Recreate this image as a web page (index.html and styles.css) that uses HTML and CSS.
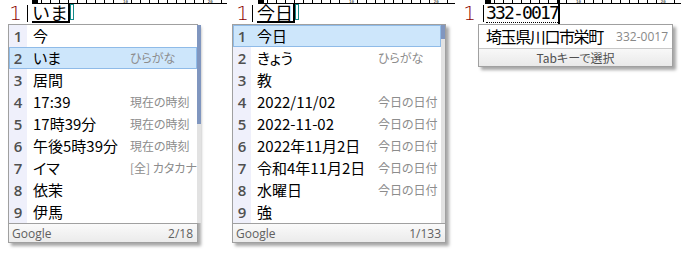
FILE: index.html
```html
<!DOCTYPE html>
<html lang="ja">
<head>
<meta charset="utf-8">
<title>IME candidates</title>
<link rel="stylesheet" href="styles.css">
</head>
<body>
<div class="screen">
  <div class="pane pane-1">
    <div class="ruler ruler-1"><span class="ruler-mark"></span><span class="ruler-label lab-10">10</span><span class="ruler-label lab-20">20</span></div>
    <div class="line">
      <span class="lnum lnum-1">1</span><span class="bar bar-1"></span><span class="comp comp-solid">いま</span><span class="caret"></span><span class="ime-box"></span>
    </div>
    <div class="popup popup-1">
      <div class="body">
        <div class="rows">
          <div class="row"><span class="n">1</span><span class="c">今</span><span class="a"></span></div>
          <div class="row sel"><span class="n">2</span><span class="c">いま</span><span class="a">ひらがな</span></div>
          <div class="row"><span class="n">3</span><span class="c">居間</span><span class="a"></span></div>
          <div class="row"><span class="n">4</span><span class="c">17:39</span><span class="a">現在の時刻</span></div>
          <div class="row"><span class="n">5</span><span class="c">17時39分</span><span class="a">現在の時刻</span></div>
          <div class="row"><span class="n">6</span><span class="c">午後5時39分</span><span class="a">現在の時刻</span></div>
          <div class="row"><span class="n">7</span><span class="c">イマ</span><span class="a">[全] カタカナ</span></div>
          <div class="row"><span class="n">8</span><span class="c">依茉</span><span class="a"></span></div>
          <div class="row"><span class="n">9</span><span class="c">伊馬</span><span class="a"></span></div>
        </div>
        <div class="scroll"><div class="thumb thumb-1"></div></div>
      </div>
      <div class="foot"><span class="brand">Google</span><span class="count">2/18</span></div>
    </div>
  </div>

  <div class="pane pane-2">
    <div class="ruler ruler-2"><span class="ruler-mark"></span><span class="ruler-label lab-10">10</span><span class="ruler-label lab-20">20</span></div>
    <div class="line">
      <span class="lnum lnum-2">1</span><span class="bar bar-2"></span><span class="comp comp-solid">今日</span><span class="caret"></span><span class="ime-box"></span>
    </div>
    <div class="popup popup-2">
      <div class="body">
        <div class="rows">
          <div class="row sel"><span class="n">1</span><span class="c">今日</span><span class="a"></span></div>
          <div class="row"><span class="n">2</span><span class="c">きょう</span><span class="a">ひらがな</span></div>
          <div class="row"><span class="n">3</span><span class="c">教</span><span class="a"></span></div>
          <div class="row"><span class="n">4</span><span class="c">2022/11/02</span><span class="a">今日の日付</span></div>
          <div class="row"><span class="n">5</span><span class="c">2022-11-02</span><span class="a">今日の日付</span></div>
          <div class="row"><span class="n">6</span><span class="c">2022年11月2日</span><span class="a">今日の日付</span></div>
          <div class="row"><span class="n">7</span><span class="c">令和4年11月2日</span><span class="a">今日の日付</span></div>
          <div class="row"><span class="n">8</span><span class="c">水曜日</span><span class="a">今日の日付</span></div>
          <div class="row"><span class="n">9</span><span class="c">強</span><span class="a"></span></div>
        </div>
        <div class="scroll"><div class="thumb thumb-2"></div></div>
      </div>
      <div class="foot"><span class="brand">Google</span><span class="count">1/133</span></div>
    </div>
  </div>

  <div class="pane pane-3">
    <div class="ruler ruler-3"><span class="ruler-mark"></span><span class="ruler-label lab-10">10</span><span class="ruler-label lab-20">20</span></div>
    <div class="line">
      <span class="lnum lnum-3">1</span><span class="bar bar-3"></span><span class="comp comp-dotted">332-0017</span><span class="caret caret-tall"></span>
    </div>
    <div class="popup popup-3">
      <div class="addr-row"><span class="addr">埼玉県川口市栄町</span><span class="zip">332-0017</span></div>
      <div class="foot-tab">Tabキーで選択</div>
    </div>
  </div>
</div>
</body>
</html>
```

FILE: styles.css
```css
* { box-sizing: border-box; margin: 0; padding: 0; }
html, body { background: #fff; }
body {
  width: 681px;
  height: 262px;
  overflow: hidden;
  font-family: "Noto Sans CJK JP", sans-serif;
  color: #000;
}
.screen { display: flex; align-items: flex-start; }
.pane { flex: none; display: flex; flex-direction: column; align-items: flex-start; }
.pane-1 { width: 226px; }
.pane-2 { width: 227px; }
.pane-3 { width: 228px; }

/* ruler along the top of the view */
.ruler {
  flex: none;
  display: flex;
  align-items: flex-start;
  height: 4px;
  margin-left: 32px;
  border-bottom: 1px solid #000;
  background: repeating-linear-gradient(to right, #000 0 1px, transparent 1px 9px);
}
.ruler-1 { width: 195px; }
.ruler-2 { width: 197px; }
.ruler-3 { width: 196px; }
.ruler-mark { flex: none; width: 6px; height: 3px; background: #000; }
.ruler-label {
  flex: none;
  height: 3px;
  padding: 0 1px;
  font: 4px/3px "DejaVu Sans Mono", monospace;
  background: #fff;
  color: #000;
}
.lab-10 { margin-left: 84px; }
.lab-20 { margin-left: 78px; }

/* editor line */
.line { display: flex; align-items: flex-start; height: 20px; }
.lnum {
  flex: none;
  text-align: right;
  font: 300 20px/18px "DejaVu Sans", sans-serif;
  color: #8b0000;
}
.lnum-1 { width: 22px; }
.lnum-2 { width: 23px; }
.lnum-3 { width: 23px; }
.bar { flex: none; width: 1px; height: 17px; margin-top: 1px; background: #000; }
.bar-1 { margin-left: 5px; margin-right: 4px; }
.bar-2 { margin-left: 3px; margin-right: 4px; }
.bar-3 { margin-left: 7px; margin-right: 2px; }
.comp { flex: none; height: 19px; font-size: 18px; line-height: 17px; white-space: nowrap; }
.comp-solid { border-bottom: 2px solid #000; }
.comp-dotted {
  font-family: "DejaVu Sans Mono", monospace;
  letter-spacing: -1.84px;
  border-bottom: 1px dotted #000;
}
.caret { flex: none; width: 2px; height: 19px; background: #000; }
.caret-tall { height: 25px; margin-top: -4px; }
.ime-box { flex: none; width: 4px; height: 16px; border: 1px solid #138a8a; }

/* candidate popups */
.popup {
  flex: none;
  border: 1px solid #a0a0a0;
  background: #fff;
  box-shadow: 3px 3px 3px rgba(0, 0, 0, 0.35);
}
.popup-1 { width: 190px; margin-left: 8px; }
.popup-2 { width: 214px; margin-left: 6px; }
.popup-3 { width: 195px; margin-left: 25px; }

.body { display: flex; }
.rows { flex: 1; }
.scroll { flex: none; width: 4px; background: #e2e2e2; }
.thumb { background: #8096bf; }
.thumb-1 { height: 99px; }
.thumb-2 { height: 14px; }

.row { display: flex; height: 22px; line-height: 22px; white-space: nowrap; }
.n {
  flex: none;
  width: 18px;
  text-align: center;
  background: #eff0fb;
  font: 600 15px/22px "Open Sans", sans-serif;
  color: #505050;
}
.c { flex: none; padding-left: 6px; font-size: 15px; font-feature-settings: "palt"; }
.popup-1 .c { width: 103px; }
.popup-2 .c { width: 127px; }
.a { font-size: 12px; color: #8c8c8c; font-feature-settings: "palt"; }
.row.sel { background: #cde6fb; box-shadow: inset 0 0 0 1px #8fbbe8; }
.row.sel .n { background: transparent; }

.foot {
  display: flex;
  justify-content: space-between;
  align-items: center;
  height: 19px;
  padding: 0 4px 0 3px;
  border-top: 1px solid #a0a0a0;
  background: linear-gradient(#fafafa, #ebebeb);
  font: 12px "Open Sans", sans-serif;
  color: #606060;
}

.addr-row {
  display: flex;
  justify-content: space-between;
  align-items: center;
  height: 23px;
  padding: 0 4px 0 7px;
}
.addr { font-size: 16px; letter-spacing: -1.4px; line-height: 23px; }
.zip { font: 12px "Open Sans", sans-serif; color: #888; }
.foot-tab {
  height: 18px;
  border-top: 1px solid #c8c8c8;
  background: linear-gradient(#f8f8f8, #e9e9e9);
  text-align: center;
  font-size: 12px;
  line-height: 17px;
  color: #505050;
  font-feature-settings: "palt";
}
```
